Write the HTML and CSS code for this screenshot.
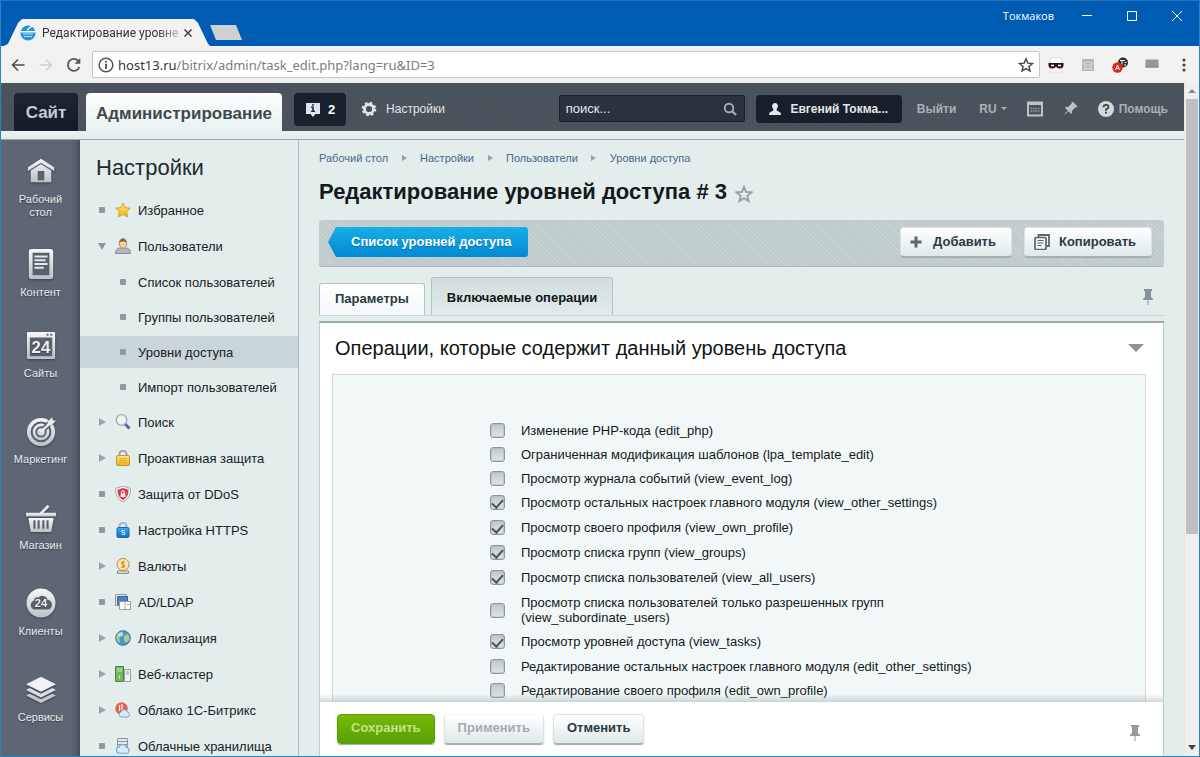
FILE: index.html
```html
<!DOCTYPE html>
<html lang="ru">
<head>
<meta charset="utf-8">
<title>Редактирование уровней доступа # 3</title>
<link rel="stylesheet" href="styles.css">
</head>
<body>
<svg class="defs" aria-hidden="true">
  <defs>
    <linearGradient id="silver" x1="0" y1="0" x2="0" y2="1"><stop offset="0" stop-color="#f6f7f8"/><stop offset="1" stop-color="#bcc1c7"/></linearGradient>
    <linearGradient id="gold" x1="0" y1="0" x2="0" y2="1"><stop offset="0" stop-color="#ffe487"/><stop offset="1" stop-color="#f0b51c"/></linearGradient>
    <linearGradient id="azure" x1="0" y1="0" x2="0" y2="1"><stop offset="0" stop-color="#45a9ee"/><stop offset="1" stop-color="#0b6cc4"/></linearGradient>
    <symbol id="pin" viewBox="0 0 12 18"><path d="M2 1h8v2H9v6l2 2v1H1v-1l2-2V3H2z"/><path d="M5.5 12h1v5h-1z"/></symbol>
    <symbol id="cloud" viewBox="0 0 14 9"><path d="M3.5 8.3a2.7 2.7 0 0 1-.4-5.3A3.6 3.6 0 0 1 10 2.900a2.800 2.800 0 0 1 .6 5.400z" fill="#d7ecfb" stroke="#6fa8d8"/></symbol>
  </defs>
</svg>

<div class="window">
  <header class="titlebar">
    <div class="browser-tab">
      <svg class="favicon" viewBox="0 0 16 16"><circle cx="8" cy="8" r="7.500" fill="#2491d2"/><path d="M1 6h14v1.500H1z" fill="#fff"/><path d="M3 9h10M4 11.500h8" stroke="#bfe2f6" stroke-width="1.200"/><path d="M7 5l5-4" stroke="#fff" stroke-width="1.500"/></svg>
      <span class="browser-tab-title">Редактирование уровне</span>
      <button class="plain tab-close" aria-label="Закрыть вкладку"><svg viewBox="0 0 10 10"><path d="M1.500 1.500l7 7m0-7l-7 7" stroke="#333" stroke-width="1.400"/></svg></button>
    </div>
    <button class="plain new-tab" aria-label="Новая вкладка"></button>
    <span class="profile">Токмаков</span>
    <div class="window-buttons">
      <button class="plain" aria-label="Свернуть"><svg viewBox="0 0 12 12"><path d="M1 5.500h10" stroke="#fff"/></svg></button>
      <button class="plain" aria-label="Развернуть"><svg viewBox="0 0 12 12"><path d="M1.500 1.500h9v9h-9z" fill="none" stroke="#fff"/></svg></button>
      <button class="plain" aria-label="Закрыть"><svg viewBox="0 0 12 12"><path d="M1 1l10 10m0-10L1 11" stroke="#fff"/></svg></button>
    </div>
  </header>

  <div class="navbar">
    <button class="plain" aria-label="Назад"><svg viewBox="0 0 16 16"><path d="M14.500 8H2.500M8 2.500L2.500 8 8 13.500" fill="none" stroke="#4c4c4c" stroke-width="1.600"/></svg></button>
    <button class="plain" aria-label="Вперёд"><svg viewBox="0 0 16 16"><path d="M1.500 8h12M8 2.500L13.500 8 8 13.500" fill="none" stroke="#d0d0d0" stroke-width="1.600"/></svg></button>
    <button class="plain" aria-label="Обновить"><svg viewBox="0 0 16 16"><path d="M13.500 10A6 6 0 1 1 12.300 3.800" fill="none" stroke="#555" stroke-width="1.700"/><path d="M14.300 1v5.800H8.500z" fill="#555"/></svg></button>
    <div class="address">
      <svg viewBox="0 0 14 14"><circle cx="7" cy="7" r="6" fill="none" stroke="#555" stroke-width="1.300"/><path d="M6.300 6h1.500v4.500H6.300zM6.300 3.300h1.500v1.500H6.300z" fill="#444"/></svg>
      <a class="url" href="#">host13.ru<span>/bitrix/admin/task_edit.php?lang=ru&amp;ID=3</span></a>
      <button class="plain" aria-label="В закладки"><svg viewBox="0 0 16 16"><path d="M8 1.800l1.800 4.300 4.700.4-3.600 3 1.100 4.600L8 11.600l-4 2.500 1.100-4.600-3.600-3 4.700-.4z" fill="none" stroke="#444" stroke-width="1.400"/></svg></button>
    </div>
    <div class="extensions">
      <svg viewBox="0 0 16 16"><path d="M3 1h10l1 3v11H2V4z" fill="#fff" stroke="#ddd"/><path d="M.5 6h15v3q-1 3-4 2.500Q9 11.500 8 9.500 7 11.500 4.500 11.500 1.500 12 .5 9z" fill="#331010"/><path d="M3 7.800h3v1.500H3zM10 7.800h3v1.500h-3z" fill="#fff"/></svg>
      <svg viewBox="0 0 16 16"><path d="M2 2h12v12H2z" fill="#b5b5b5"/><path d="M4 5h8v3H4zM4 10h3M9 10h3M3 12h10" stroke="#dedede" fill="none"/></svg>
      <svg viewBox="0 0 16 16"><circle cx="11" cy="5.500" r="5" fill="#26342c"/><path d="M8 3.500h5M10 3.500v4M12.500 5.500h2M12 8h2" stroke="#fff"/><circle cx="5.500" cy="10.500" r="5.200" fill="#e0261b"/><path d="M3.500 13l2-5 2 5M4.200 11.500h2.600" stroke="#fff" fill="none"/></svg>
      <svg viewBox="0 0 16 16"><path d="M1.500 2.500h13v8h-13z" fill="#969696"/><path d="M1.500 9.500h13v1h-13z" fill="#858585"/></svg>
      <button class="plain" aria-label="Меню"><svg viewBox="0 0 16 16" fill="#444"><circle cx="8" cy="3" r="1.600"/><circle cx="8" cy="8" r="1.600"/><circle cx="8" cy="13" r="1.600"/></svg></button>
    </div>
  </div>

  <div class="viewport">
    <div class="page">
      <header class="admin-bar">
        <a class="site-tab" href="#">Сайт</a>
        <a class="admin-tab" href="#">Администрирование</a>
        <button class="plain notices"><svg viewBox="0 0 16 16"><path d="M1 1h14v11h-4.500L8 15l-2.500-3H1z" fill="#dfe4ea"/><path d="M6 4.500h2.800v4.200H10V10H6V8.700h1.200V5.800H6zM7 2.300h1.800v1.500H7z" fill="#20262f"/></svg>2</button>
        <a class="settings" href="#"><svg viewBox="0 0 16 16"><circle cx="8" cy="8" r="4.500" fill="none" stroke="#dfe3e7" stroke-width="2.800"/><circle cx="8" cy="8" r="6.200" fill="none" stroke="#dfe3e7" stroke-width="2.200" stroke-dasharray="2.500 2.370"/></svg>Настройки</a>
        <div class="bar-right">
          <div class="search"><input type="text" placeholder="поиск..." aria-label="Поиск"><svg viewBox="0 0 14 14"><circle cx="6" cy="6" r="4.300" fill="none" stroke="#a5abb2" stroke-width="1.900"/><path d="M9 9l4 4" stroke="#a5abb2" stroke-width="2.400"/></svg></div>
          <button class="plain user"><svg viewBox="0 0 12 12"><path d="M6 0a3 3.300 0 0 1 1.700 6v1.600L11 9.200q1 .6 1 2.800H0q0-2.200 1-2.800l3.300-1.600V6A3 3.300 0 0 1 6 0z" fill="#e4e8ec"/></svg>Евгений Токма...</button>
          <a class="logout" href="#">Выйти</a>
          <button class="plain lang">RU<i></i></button>
          <button class="plain" aria-label="Горячие клавиши"><svg class="i16" viewBox="0 0 16 16"><path d="M1 1.500h14v13H1z" fill="none" stroke="#bcc3c9" stroke-width="2"/><path d="M1 3h14" stroke="#bcc3c9" stroke-width="2"/><path d="M3.500 7.500h9M3.500 10h9" stroke="#87919a" stroke-width="1.600" stroke-dasharray="1.800 .6"/></svg></button>
          <button class="plain" aria-label="Закрепить"><svg class="i16 tilted" viewBox="0 0 12 18" fill="#b9c0c6"><use href="#pin"/></svg></button>
          <a class="help" href="#"><svg class="i16" viewBox="0 0 16 16"><circle cx="8" cy="8" r="8" fill="#d3d8dc"/><path d="M5.500 6.300Q5.500 3.800 8 3.800t2.500 2.200Q10.500 7.400 8 8.300v1.500" fill="none" stroke="#3c444d" stroke-width="1.800"/><path d="M7 10.800h2v1.800H7z" fill="#3c444d"/></svg>Помощь</a>
        </div>
      </header>

      <div class="columns">
        <nav class="rail" aria-label="Разделы">
          <a href="#" class="rail-item compact"><svg viewBox="0 0 32 32"><path d="M16 3L2 12v4l3-1.500V28h22V14.500l3 1.500v-4z" fill="url(#silver)"/><path d="M4.500 15L16 8l11.500 7" fill="none" stroke="#68707d" stroke-width="1.500"/><path d="M12.500 16h7v10h-7z" fill="#59616e"/></svg>Рабочий<br>стол</a>
          <a href="#" class="rail-item compact"><svg viewBox="0 0 32 32"><rect x="3" y="0" width="26" height="32" rx="3" fill="url(#silver)"/><path d="M7 4h18v24H7z" fill="#59616e"/><path d="M9 8h14M9 12h12M9 16h14M9 20h10" stroke="#e3e6e9" stroke-width="2"/></svg>Контент</a>
          <a href="#" class="rail-item"><svg viewBox="0 0 32 32"><rect x="1" y="2" width="30" height="29" rx="1.500" fill="url(#silver)"/><path d="M4 8h24v20H4z" fill="#59616e"/><path d="M22 4h2v2h-2zM26 4h2v2h-2z" fill="#59616e"/><text x="16" y="25" text-anchor="middle" class="badge-lg">24</text></svg>Сайты</a>
          <a href="#" class="rail-item"><svg viewBox="0 0 32 32"><circle cx="16" cy="17" r="15" fill="url(#silver)"/><circle cx="16" cy="17" r="10" fill="none" stroke="#59616e" stroke-width="2.200"/><circle cx="16" cy="17" r="5" fill="none" stroke="#59616e" stroke-width="2"/><path d="M19 14L30 3" stroke="#59616e" stroke-width="6"/><path d="M16 17L26 7" stroke="#e8eaec" stroke-width="2.500"/><path d="M23 6l5-5 .5 3.500L32 5l-5 5h-3.500z" fill="#e8eaec"/></svg>Маркетинг</a>
          <a href="#" class="rail-item"><svg viewBox="0 -3 32 32"><path d="M14 9L23 0l2 2-7 7z" fill="#e8eaec"/><path d="M0 8.500h32v4H0z" fill="url(#silver)"/><path d="M2.500 14h27L27 29H5z" fill="url(#silver)"/><path d="M9 16.500v9M13.500 16.500v9M18.500 16.500v9M23 16.500v9" stroke="#59616e" stroke-width="2.200"/></svg>Магазин</a>
          <a href="#" class="rail-item"><svg viewBox="0 0 32 32"><circle cx="16" cy="16" r="15.500" fill="url(#silver)"/><path d="M9 23a5 5 0 0 1-.8-9.500 4.500 4.500 0 0 1 5-3.500 6 6 0 0 1 9.800 2.500A5.300 5.300 0 0 1 23 23z" fill="#59616e"/><text x="16" y="20.500" text-anchor="middle" class="badge-sm">24</text></svg>Клиенты</a>
          <a href="#" class="rail-item"><svg viewBox="0 -5 32 32"><path d="M16 -2l16 8L16 14 0 6z" fill="#f0f2f3"/><path d="M0 12l4-2L16 16l12-6L32 12l-16 8z" fill="#d9dde0"/><path d="M0 18l4-2L16 22l12-6 4 2-16 8z" fill="#c3c8cd"/></svg>Сервисы</a>
        </nav>

        <nav class="menu" aria-label="Настройки">
          <h2>Настройки</h2>
          <ul>
            <li><a href="#"><i class="dot"></i><svg viewBox="0 0 16 16"><path d="M8 1l2.200 4.600 5 .7-3.600 3.500.9 5L8 12.400l-4.500 2.400.9-5L.8 6.300l5-.7z" fill="url(#gold)" stroke="#d99e22"/></svg>Избранное</a></li>
            <li><a href="#"><i class="open"></i><svg viewBox="0 0 16 16"><path d="M.5 15.500q0-5 4-5.500h7q4 .5 4 5.500z" fill="#b4b6bb" stroke="#8c8f96"/><ellipse cx="8" cy="5.500" rx="3.700" ry="4.700" fill="#f3cf9f" stroke="#b98a55"/><path d="M4.200 4.500Q5 .5 8 .5t3.800 4Q8 2.500 4.200 4.500z" fill="#8a6541"/></svg>Пользователи</a>
              <ul>
                <li><a href="#"><i class="dot"></i>Список пользователей</a></li>
                <li><a href="#"><i class="dot"></i>Группы пользователей</a></li>
                <li><a href="#" class="current" aria-current="page"><i class="dot"></i>Уровни доступа</a></li>
                <li><a href="#"><i class="dot"></i>Импорт пользователей</a></li>
              </ul>
            </li>
            <li><a href="#"><i class="closed"></i><svg viewBox="0 0 16 16"><path d="M10 10l4.500 4.500" stroke="#5b5fae" stroke-width="3"/><circle cx="6.500" cy="6" r="5.300" fill="#edf3f5" stroke="#a3a9ae" stroke-width="1.300"/></svg>Поиск</a></li>
            <li><a href="#"><i class="closed"></i><svg viewBox="0 0 16 16"><path d="M4.500 7V4a3.500 3.200 0 0 1 7 0v3" fill="none" stroke="#9fa2a3" stroke-width="2"/><rect x="1.500" y="5.500" width="13" height="10" rx="1.500" fill="url(#gold)" stroke="#c9962b"/><path d="M4 8.500h8M4 10.500h8M4 12.500h8" stroke="#dca62d" stroke-width=".8"/></svg>Проактивная защита</a></li>
            <li><a href="#"><i class="dot"></i><svg viewBox="0 0 16 16"><path d="M8 0l7.500 2.500Q16 12 8 16 0 12 .5 2.500z" fill="#f5f5f5" stroke="#a7a7a7"/><path d="M8 2l5.500 1.800Q13.800 11 8 14.200 2.200 11 2.500 3.800z" fill="#dc3b4e"/><path d="M6.700 8V6.200q0-1.500 1.300-1.500t1.300 1.500V8" fill="none" stroke="#fff"/><path d="M5.700 7.500h4.600V11H5.700z" fill="#fff"/></svg>Защита от DDoS</a></li>
            <li><a href="#"><i class="dot"></i><svg viewBox="0 0 16 16"><path d="M4.500 7V4a3.500 3.200 0 0 1 7 0v3" fill="none" stroke="#9fb2c0" stroke-width="2"/><rect x="2" y="5.500" width="12" height="10" rx="1.500" fill="url(#azure)" stroke="#1667ad"/><path d="M10 8.500H7v2h2.500v2H6.500" fill="none" stroke="#bfe0fb" stroke-width="1.200"/></svg>Настройка HTTPS</a></li>
            <li><a href="#"><i class="closed"></i><svg viewBox="0 0 16 16"><path d="M2.500 13h11v2.500h-11z" fill="#dedede" stroke="#909090"/><circle cx="8" cy="6.500" r="6" fill="#fbe7be" stroke="#b88b3c"/><path d="M10 4.500Q8 3.300 6.700 4.500 6 6 8 6.500t1.700 2Q8 10 6 8.700M8 2.800v7.400" fill="none" stroke="#dd971f" stroke-width="1.200"/></svg>Валюты</a></li>
            <li><a href="#"><i class="dot"></i><svg viewBox="0 0 16 16"><path d="M.5.500h11v11H.5z" fill="#e8ecf0" stroke="#8f979e"/><path d="M2.500 2.500h10v8h-10z" fill="#4b83c2" stroke="#356499"/><path d="M4.500 7.500h11v8h-11z" fill="#fbfbfb" stroke="#9a9da0"/><path d="M10 8v7M12 10.500h2.500" stroke="#a8abad"/></svg>AD/LDAP</a></li>
            <li><a href="#"><i class="closed"></i><svg viewBox="0 0 16 16"><circle cx="8" cy="8" r="7.300" fill="#5490cf" stroke="#3c6cab"/><path d="M2 5q2-3 6-3.500L7 5 4 8l1 4-1 1Q0 9 2 5zM9 6l4-2q2 3 1.500 6L11 13 9 10z" fill="#a8d08a"/><ellipse cx="5.500" cy="4.500" rx="3" ry="2" fill="#fff" opacity=".4"/></svg>Локализация</a></li>
            <li><a href="#"><i class="closed"></i><svg viewBox="0 0 16 16"><path d="M.5.500h8v15h-8z" fill="#73b860" stroke="#4d873e"/><path d="M2 3h5M2 5h5M4.500 9v4" stroke="#c4e4b8"/><path d="M9.500 3.500h6v12h-6z" fill="#f0f2f2" stroke="#999fa1"/><path d="M11 6h3M11 8h3" stroke="#999fa1"/></svg>Веб-кластер</a></li>
            <li><a href="#"><i class="closed"></i><svg viewBox="0 0 16 16"><circle cx="6.500" cy="6.500" r="6.200" fill="#e8604c"/><path d="M4.500 3v6M7 2v6" stroke="#fff" stroke-width="1.200"/><use href="#cloud" x="3" y="7" width="13" height="9"/></svg>Облако 1С-Битрикс</a></li>
            <li><a href="#"><i class="dot"></i><svg viewBox="0 0 16 16"><path d="M2.500.500h10v9h-10z" fill="#e5e8ea" stroke="#8e969b"/><path d="M3 3.500h9M3 6.500h9" stroke="#8e969b"/><use href="#cloud" x="0" y="6" width="16" height="10"/></svg>Облачные хранилища</a></li>
          </ul>
        </nav>

        <main class="content">
          <nav class="crumbs" aria-label="Навигация">
            <a href="#">Рабочий стол</a><i class="closed"></i><a href="#">Настройки</a><i class="closed"></i><a href="#">Пользователи</a><i class="closed"></i><a href="#">Уровни доступа</a>
          </nav>
          <h1>Редактирование уровней доступа # 3 <svg viewBox="0 0 18 18"><path d="M9 2l2 5 5.500.400-4.200 3.500 1.300 5.200L9 13.200l-4.600 2.900 1.300-5.200L1.500 7.400 7 7z" fill="none" stroke="#939da4" stroke-width="1.800"/></svg></h1>

          <div class="actions">
            <a class="back" href="#"><span>Список уровней доступа</span></a>
            <button class="btn"><svg class="plus" viewBox="0 0 12 12"><path d="M6 .500v11M.5 6h11" stroke="#5c666c" stroke-width="3"/></svg>Добавить</button>
            <button class="btn"><svg class="copy" viewBox="0 0 16 16"><path d="M4.500 3V1h10.500v11h-2" fill="none" stroke="#5c666c" stroke-width="1.800"/><rect x="1" y="3.500" width="11" height="12" rx="1" fill="#eef3f3" stroke="#5c666c" stroke-width="1.700"/><path d="M3.500 6.500h6M3.500 9h6M3.500 11.500h4" stroke="#5c666c"/></svg>Копировать</button>
          </div>

          <div class="tabs">
            <button class="tab">Параметры</button>
            <button class="tab active">Включаемые операции</button>
            <button class="plain tabs-pin" aria-label="Закрепить вкладки"><svg class="pin" fill="#87939a"><use href="#pin"/></svg></button>
          </div>

          <section class="panel">
            <div class="panel-head"><h2>Операции, которые содержит данный уровень доступа</h2><button class="plain collapse" aria-label="Свернуть"></button></div>
            <div class="panel-body">
              <div class="operations">
                <label><input type="checkbox"><span>Изменение PHP-кода (edit_php)</span></label>
                <label><input type="checkbox"><span>Ограниченная модификация шаблонов (lpa_template_edit)</span></label>
                <label><input type="checkbox"><span>Просмотр журнала событий (view_event_log)</span></label>
                <label class="granted"><input type="checkbox" checked><span>Просмотр остальных настроек главного модуля (view_other_settings)</span></label>
                <label class="granted"><input type="checkbox" checked><span>Просмотр своего профиля (view_own_profile)</span></label>
                <label class="granted"><input type="checkbox" checked><span>Просмотр списка групп (view_groups)</span></label>
                <label class="granted"><input type="checkbox" checked><span>Просмотр списка пользователей (view_all_users)</span></label>
                <label><input type="checkbox"><span>Просмотр списка пользователей только разрешенных групп<br>(view_subordinate_users)</span></label>
                <label class="granted"><input type="checkbox" checked><span>Просмотр уровней доступа (view_tasks)</span></label>
                <label><input type="checkbox"><span>Редактирование остальных настроек главного модуля (edit_other_settings)</span></label>
                <label><input type="checkbox"><span>Редактирование своего профиля (edit_own_profile)</span></label>
              </div>
            </div>
            <footer class="panel-foot">
              <button class="btn save">Сохранить</button>
              <button class="btn apply">Применить</button>
              <button class="btn">Отменить</button>
              <button class="plain foot-pin" aria-label="Закрепить панель"><svg class="pin" fill="#949a9d"><use href="#pin"/></svg></button>
            </footer>
          </section>
        </main>
      </div>
    </div>
    <div class="scrollbar" aria-hidden="true"><i class="up"></i><div class="thumb"></div><i class="down"></i></div>
  </div>
</div>
</body>
</html>
```

FILE: styles.css
```css
* { box-sizing: border-box; }
body { margin: 0; font-family: "Liberation Sans", Arial, sans-serif; font-size: 13px; color: #1a2023; }
a { color: inherit; text-decoration: none; }
ul { list-style: none; margin: 0; padding: 0; }
h1, h2 { margin: 0; }
svg { display: block; flex: none; }
button { font-family: inherit; cursor: pointer; white-space: nowrap; }
.plain { border: 0; padding: 0; background: none; color: inherit; display: flex; align-items: center; justify-content: center; }
.defs { position: absolute; width: 0; height: 0; }

.window { height: 100vh; display: flex; flex-direction: column; overflow: hidden; border: 1px solid #2c83bf; border-top-color: #2575bd; }

/* Browser frame */
.titlebar { height: 45px; flex: none; display: flex; align-items: flex-end; background: #005bb3; color: #fff; font-family: "Open Sans", "Noto Sans", sans-serif; }
.browser-tab { width: 206px; height: 27px; margin-left: 3px; padding: 0 17px 0 16px; display: flex; align-items: center; background: #f2f2f2; clip-path: polygon(0 100%, 4px 92%, 14px 4px, 18px 0, 190px 0, 194px 4px, 204px 92%, 100% 100%); color: #333; }
.favicon { width: 16px; height: 16px; }
.browser-tab-title { flex: none; margin-left: 6px; font-family: Roboto, "Open Sans", sans-serif; font-size: 12px; white-space: nowrap; mask-image: linear-gradient(90deg, #000 84%, rgba(0,0,0,.3)); }
.tab-close { margin-left: auto; }
.tab-close svg { width: 10px; height: 10px; }
.new-tab { width: 32px; height: 15px; margin-bottom: 6px; background: #cfd0d2; clip-path: polygon(0 0, 26px 0, 32px 100%, 6px 100%); }
.profile { margin-left: auto; align-self: flex-start; margin-top: 6px; font-size: 11px; line-height: 17px; }
.window-buttons { display: flex; gap: 33px; align-self: flex-start; margin: 9px 16px 0 27px; }
.window-buttons svg { width: 12px; height: 12px; }
.navbar { height: 37px; flex: none; display: flex; align-items: center; gap: 12px; padding: 0 9px; background: #f2f2f2; }
.navbar svg { width: 16px; height: 16px; }
.address { flex: 1; height: 27px; margin-left: -2px; display: flex; align-items: center; gap: 4px; padding: 0 5px; background: #fff; border: 1px solid #c6c6c6; border-radius: 2px; }
.url { flex: 1; color: #333; font-family: "Noto Sans", "Open Sans", sans-serif; font-size: 13px; white-space: nowrap; }
.url span { color: #7c7c7c; }
.extensions { display: flex; gap: 16px; margin-left: -4px; margin-right: -2px; }

.viewport { flex: 1; min-height: 0; display: flex; }
.page { flex: 1; min-width: 0; display: flex; flex-direction: column; background: #e2edec; }
.scrollbar { width: 15px; flex: none; display: flex; flex-direction: column; align-items: center; background: #f0eff0; border-left: 1px solid #e4e8e8; }
.up, .down { border: 4px solid transparent; margin: 2px 0 6px; border-bottom-color: #8a8a8a; }
.down { margin: auto 0 2px; border-bottom-color: transparent; border-top: 5px solid #444; }
.thumb { width: 12px; height: 435px; background: #c0bec0; }

/* Dark administration bar */
.admin-bar { height: 57px; flex: none; display: flex; align-items: flex-start; padding: 10px 16px 0 13px; color: #cfd5da; font-weight: bold;
  background: linear-gradient(#e8f3f2, #e1ebea) 0 48px / 100% 9px no-repeat,
    repeating-linear-gradient(90deg, rgba(255,255,255,.02) 0 1px, transparent 1px 3px),
    repeating-linear-gradient(rgba(0,0,0,.03) 0 1px, transparent 1px 3px), #4a535b; border-bottom: 1px solid #9ba6a8; }
.site-tab, .admin-tab { height: 38px; display: flex; align-items: center; justify-content: center; border-radius: 4px 4px 0 0; font-size: 17px; }
.site-tab { width: 64px; margin-right: 8px; background: linear-gradient(#1d242e, #161c27); color: #c6cdd4; padding-top: 2px; }
.admin-tab { padding: 3px 10px 0; background: linear-gradient(#fbfdfd, #e8f3f2); color: #40484c; }
.notices { width: 52px; height: 33px; margin-left: 12px; gap: 7px; border-radius: 4px; background: #1a212c; color: #fff; font-size: 13px; font-weight: bold; }
.notices svg { width: 16px; height: 16px; }
.settings { display: flex; align-items: center; gap: 9px; height: 31px; margin-left: 15px; font-size: 12px; font-weight: normal; color: #e1e5e8; }
.settings svg { width: 16px; height: 16px; }
.bar-right { margin-left: auto; display: flex; align-items: center; height: 31px; font-size: 12px; color: #a9b1b8; }
.bar-right button { font-size: 12px; font-weight: bold; }
.search { width: 186px; height: 27px; display: flex; align-items: center; padding: 0 7px 0 6px; border: 1px solid #1c222b; border-radius: 2px; background: #2b323d; }
.search input { flex: 1; min-width: 0; border: 0; padding: 0; background: none; color: #e7eaec; font: 13px "Liberation Sans", Arial, sans-serif; }
.search input::placeholder { color: #e7eaec; opacity: 1; }
.search svg { width: 14px; height: 14px; }
.bar-right .user { width: 146px; height: 28px; margin-left: 11px; gap: 9px; border-radius: 4px; background: #181f2a; color: #e4e8ec; }
.user svg { width: 12px; height: 12px; }
.logout { margin: 0 23px 0 15px; }
.bar-right .lang { gap: 4px; margin-right: 20px; }
.lang i { border: 3px solid transparent; border-top-color: #a9b1b8; margin-top: 3px; }
.i16 { width: 16px; height: 16px; }
.tilted { transform: rotate(45deg); margin: 0 20px 0 19px; }
.help { display: flex; align-items: center; gap: 5px; }

.columns { flex: 1; min-height: 0; display: flex; overflow: hidden; }

/* Icon rail */
.rail { width: 79px; flex: none; padding-top: 15px; background: linear-gradient(90deg, #5e6673 88%, #565e6b 95%, #474e5b); color: #e8ecef; font-size: 11px; line-height: 13px; text-align: center; text-shadow: 0 1px 1px #3a414c; }
.rail-item { display: block; min-height: 86px; }
.rail-item.compact { min-height: 81px; }
.rail-item:first-child { min-height: 93px; }
.rail-item svg { width: 30px; height: 32px; margin: 0 auto 6px; filter: drop-shadow(0 1px 1px #3a414c); }
.badge-lg, .badge-sm { font-weight: bold; fill: #eceef0; }
.badge-lg { font-size: 18px; }
.badge-sm { font-size: 12px; }

/* Section menu */
.menu { width: 219px; flex: none; border-right: 1px solid #a8b9c6; background: #e2edec; }
.menu h2 { padding: 15px 16px 11px; font-size: 22px; line-height: 26px; font-weight: normal; color: #22292c; }
.menu a { height: 36px; display: flex; align-items: center; gap: 7px; padding-left: 17px; white-space: nowrap; }
.menu a svg { width: 16px; height: 16px; }
.menu a i { margin-right: 1px; }
.menu li li { padding: 2px 0 1px; }
.menu li li a { height: 32px; padding-left: 38px; gap: 9px; }
.menu .current { background: #c9d5d8; }
.dot, .open, .closed { width: 10px; height: 10px; flex: none; display: flex; align-items: center; justify-content: center; }
.dot::before { content: ""; width: 6px; height: 6px; border-radius: 1px; background: #8e999d; }
.open::before { content: ""; border: 4px solid transparent; border-top: 7px solid #8e999d; border-bottom: 0; }
.closed::before { content: ""; border: 4px solid transparent; border-left: 7px solid #97a2a8; border-right: 0; }

/* Main column */
.content { flex: 1; min-width: 0; display: flex; flex-direction: column; padding: 9px 20px 0; }
.crumbs { display: flex; align-items: center; gap: 11px; font-size: 11px; line-height: 18px; color: #496a8b; }
.crumbs .closed::before { border-width: 3px 0 3px 5px; }
h1 { display: flex; align-items: center; gap: 8px; margin: 12px 0 15px; font-size: 22px; line-height: 26px; color: #14191b; }
h1 svg { width: 18px; height: 18px; margin-top: 3px; }
.actions { height: 47px; flex: none; display: flex; align-items: center; gap: 12px; padding: 0 12px 2px 9px; border-radius: 3px; border-bottom: 1px solid #a9b5b8; background: repeating-linear-gradient(45deg, rgba(255,255,255,.15) 0 1px, transparent 1px 3px), #bfcacd; }
.back { width: 200px; height: 30px; margin-right: auto; display: flex; align-items: center; padding: 0 0 1px 23px; color: #fff; font-weight: bold; white-space: nowrap; background: linear-gradient(#18aee6, #0489d4); border-radius: 3px; clip-path: polygon(8px 0, 100% 0, 100% 100%, 8px 100%, 0 50%); text-shadow: 0 1px 1px #0870ac; }
.btn { height: 30px; display: flex; align-items: center; padding: 0 15px 1px; border: 1px solid #dbe3e4; border-bottom-color: #a5b1b4; border-radius: 4px; background: linear-gradient(#fff, #dfe9ea); box-shadow: 0 1px 1px #9ca9ad; color: #2a3a41; font-size: 13px; font-weight: bold; }
.actions .btn { padding-left: 9px; }
.plus { width: 12px; height: 12px; margin-right: 11px; }
.copy { width: 16px; height: 16px; margin-right: 9px; }
.tabs { height: 49px; flex: none; display: flex; align-items: flex-end; gap: 6px; border-bottom: 1px solid #c9d5d6; }
.tab { height: 32px; padding: 0 15px 2px; border: 1px solid #b5c2c4; border-bottom: 0; border-radius: 3px 3px 0 0; background: linear-gradient(#fff, #f3f8f8); color: #2a3a41; font-size: 13px; font-weight: bold; }
.tab.active { height: 38px; padding-top: 4px; background: linear-gradient(#d3dddf, #e0ebea); color: #101415; }
.tabs-pin { margin: 0 10px 9px auto; }
.pin { width: 12px; height: 18px; }
.panel { flex: 1; min-height: 0; margin-top: 5px; display: flex; flex-direction: column; border: 1px solid #bccaca; border-top: 2px solid #9ba9ab; border-bottom: 0; background: #fff; }
.panel-head { flex: none; display: flex; align-items: center; justify-content: space-between; padding: 12px 19px 13px 15px; }
.panel-head h2 { font-size: 20px; line-height: 26px; font-weight: normal; color: #101415; }
.collapse { border: 8px solid transparent; border-top: 8px solid #8a9294; border-bottom: 0; }
.panel-body { flex: 1; min-height: 0; overflow: hidden; padding: 0 17px 0 12px; }
.operations { min-height: 100%; border: 1px solid #c9d6d6; padding: 43px 0 0 157px; background: #f1f8f7; color: #14191b; }
.operations label { display: flex; align-items: center; gap: 16px; padding: 5px 0 4px; line-height: 15px; }
.operations .granted { padding-bottom: 5px; }
.operations input { appearance: none; width: 15px; height: 15px; margin: 0; flex: none; border: 1px solid #8f999d; border-radius: 3px; background: linear-gradient(#bfc7ca, #dfe5e6); box-shadow: inset 0 0 0 1px rgba(160,170,174,.4); display: flex; justify-content: center; }
.operations input:checked::before { content: ""; width: 5px; height: 9px; margin-top: 1px; border: solid #48555a; border-width: 0 2px 2px 0; transform: rotate(42deg); }
.panel-foot { flex: none; position: relative; display: flex; align-items: center; gap: 9px; padding: 12px 22px 12px 17px; background: #fff; }
.panel-foot::before { content: ""; position: absolute; left: 0; right: 0; bottom: 100%; height: 8px; background: linear-gradient(transparent, rgba(160,178,180,.5)); }
.panel-foot .btn { padding: 0 13px 3px; }
.panel-foot .save { background: linear-gradient(#78b90a, #56a000); border-color: #5b9d08; color: #c2e08e; }
.panel-foot .apply { color: #a4adb1; border-top-color: #f6f8f8; }
.foot-pin { margin-left: auto; padding-top: 8px; }
```
